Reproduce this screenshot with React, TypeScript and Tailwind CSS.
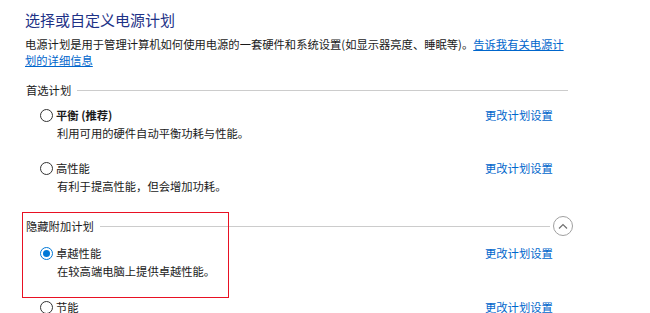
const Radio = ({ checked }: { checked?: boolean }) =>
  checked ? (
    <span className="flex h-[13px] w-[13px] shrink-0 items-center justify-center rounded-full border border-[#0078d7] bg-white">
      <span className="h-[7px] w-[7px] rounded-full bg-[#0078d7]" />
    </span>
  ) : (
    <span className="h-[13px] w-[13px] shrink-0 rounded-full border border-[#333333] bg-white" />
  );

const SectionHeader = ({ title, collapse }: { title: string; collapse?: boolean }) => (
  <div className="flex h-[16px] w-[548px] items-center">
    <span className="pl-[1px] text-[11.3px] leading-[16px] text-[#1a1a1a]">{title}</span>
    <span className={`ml-[6px] h-px flex-1 bg-[#cccccc] ${collapse ? "" : "mr-[5px]"}`} />
    {collapse && (
      <span className="ml-[3px] flex h-[20px] w-[20px] items-center justify-center rounded-full border border-[#a0a0a0]">
        <svg width="10" height="6" viewBox="0 0 10 6" fill="none">
          <path d="M1 5.5L5 1.5L9 5.5" stroke="#707070" strokeWidth="1.2" />
        </svg>
      </span>
    )}
  </div>
);

const PlanRow = ({
  name,
  desc,
  checked,
  bold,
  className,
}: {
  name: string;
  desc?: string;
  checked?: boolean;
  bold?: boolean;
  className?: string;
}) => (
  <div className={className}>
    <div className="flex h-[16px] items-center">
      <div className="flex w-[460px] items-center pl-[15px]">
        <Radio checked={checked} />
        <span className={`ml-[3px] text-[11.3px] leading-[16px] text-[#1a1a1a] ${bold ? "font-bold" : ""}`}>
          {name}
        </span>
      </div>
      <a href="#" className="text-[11.3px] leading-[16px] text-[#0066cc] underline-offset-2 hover:underline">
        更改计划设置
      </a>
    </div>
    {desc && (
      <div className="mt-[2px] pl-[32px] text-[11.3px] leading-[16px] text-[#1a1a1a]">{desc}</div>
    )}
  </div>
);

export default function App() {
  return (
    <div
      className="relative h-[313px] w-[650px] overflow-hidden bg-white pl-[25px] pt-[10px]"
      style={{ fontFamily: '"Microsoft YaHei", "Noto Sans CJK SC", "Noto Sans", sans-serif' }}
    >
      <h1 className="text-[15px] leading-[20px] text-[#1e3287]">选择或自定义电源计划</h1>
      <p className="mt-[6px] whitespace-nowrap text-[11.3px] leading-[16px] text-[#1a1a1a]">
        电源计划是用于管理计算机如何使用电源的一套硬件和系统设置(如显示器亮度、睡眠等)。
        <a href="#" className="text-[#0066cc] underline">
          告诉我有关电源计
          <br />
          划的详细信息
        </a>
      </p>

      <div className="mt-[14px]">
        <SectionHeader title="首选计划" />
      </div>
      <PlanRow className="mt-[9px]" name="平衡 (推荐)" bold desc="利用可用的硬件自动平衡功耗与性能。" />
      <PlanRow className="mt-[19px]" name="高性能" desc="有利于提高性能，但会增加功耗。" />

      <div className="mt-[24px]">
        <SectionHeader title="隐藏附加计划" collapse />
      </div>
      <PlanRow className="mt-[11px]" name="卓越性能" checked desc="在较高端电脑上提供卓越性能。" />
      <PlanRow className="mt-[20px]" name="节能" />

      <div className="pointer-events-none absolute left-[22px] top-[212px] h-[86px] w-[207px] border border-[#e81123]" />
    </div>
  );
}
